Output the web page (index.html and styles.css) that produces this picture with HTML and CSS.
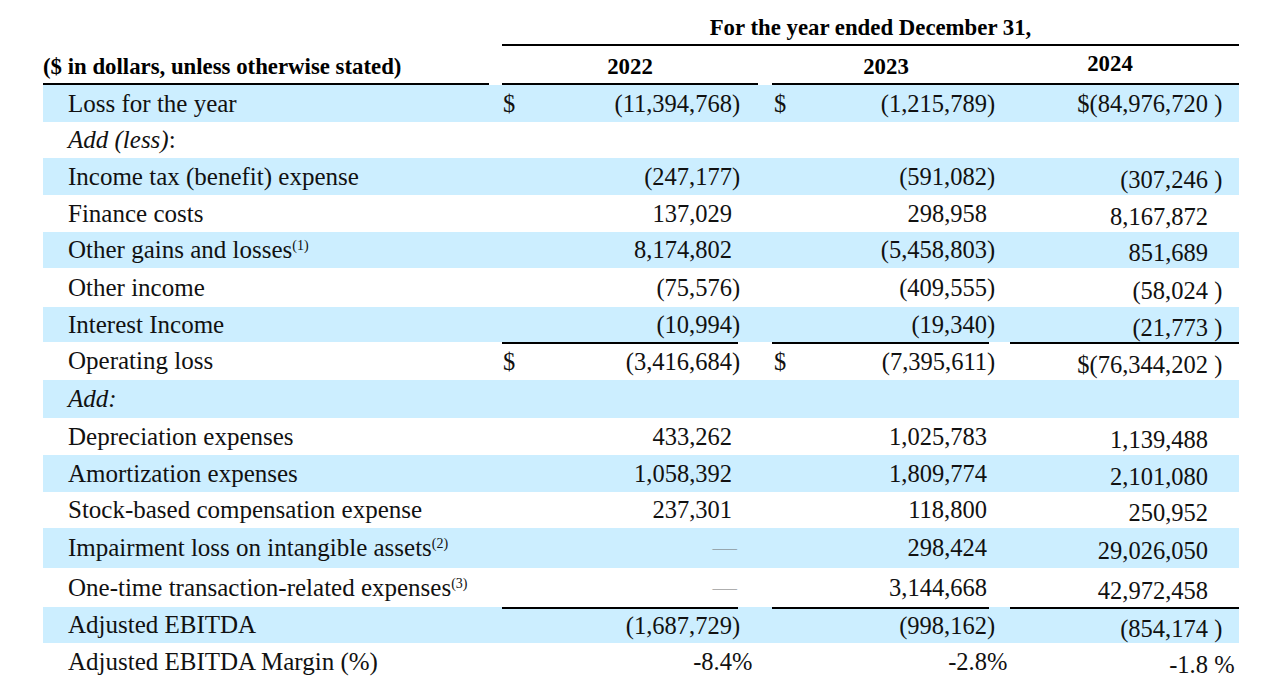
FILE: index.html
```html
<!DOCTYPE html>
<html lang="en">
<head>
<meta charset="utf-8">
<title>Adjusted EBITDA reconciliation</title>
<link rel="stylesheet" href="styles.css">
</head>
<body>
<div class="sheet">
  <div class="h1">For the year ended December 31,</div>
  <div class="h2">
    <div class="h2-label">($ in dollars, unless otherwise stated)</div>
    <div class="h2-gap1"></div>
    <div class="h2-y22">2022</div>
    <div class="h2-gap2"></div>
    <div class="h2-group">
      <div class="h2-y23">2023</div>
      <div class="h2-y24">2024</div>
    </div>
  </div>

  <div class="tbody">
    <div class="row hl">
      <div class="lbl"><span>Loss for the year</span></div>
      <div class="n c22"><span class="cur">$</span><span class="v">(11,394,768<span class="h">)</span></span></div>
      <div></div>
      <div class="n c23"><span class="cur">$</span><span class="v">(1,215,789<span class="h">)</span></span></div>
      <div></div>
      <div class="n c24 flat"><span class="v">$(84,976,720<span class="h">&nbsp;)</span></span></div>
    </div>
    <div class="row">
      <div class="lbl"><span><i>Add (less)</i>:</span></div>
      <div></div><div></div><div></div><div></div><div></div>
    </div>
    <div class="row hl">
      <div class="lbl"><span>Income tax (benefit) expense</span></div>
      <div class="n c22"><span class="v">(247,177<span class="h">)</span></span></div>
      <div></div>
      <div class="n c23"><span class="v">(591,082<span class="h">)</span></span></div>
      <div></div>
      <div class="n c24"><span class="v">(307,246<span class="h">&nbsp;)</span></span></div>
    </div>
    <div class="row">
      <div class="lbl"><span>Finance costs</span></div>
      <div class="n c22"><span class="v">137,029</span></div>
      <div></div>
      <div class="n c23"><span class="v">298,958</span></div>
      <div></div>
      <div class="n c24"><span class="v">8,167,872</span></div>
    </div>
    <div class="row hl">
      <div class="lbl"><span>Other gains and losses<sup>(1)</sup></span></div>
      <div class="n c22"><span class="v">8,174,802</span></div>
      <div></div>
      <div class="n c23"><span class="v">(5,458,803<span class="h">)</span></span></div>
      <div></div>
      <div class="n c24"><span class="v">851,689</span></div>
    </div>
    <div class="row">
      <div class="lbl"><span>Other income</span></div>
      <div class="n c22"><span class="v">(75,576<span class="h">)</span></span></div>
      <div></div>
      <div class="n c23"><span class="v">(409,555<span class="h">)</span></span></div>
      <div></div>
      <div class="n c24"><span class="v">(58,024<span class="h">&nbsp;)</span></span></div>
    </div>
    <div class="row hl">
      <div class="lbl"><span>Interest Income</span></div>
      <div class="n c22"><span class="v">(10,994<span class="h">)</span></span></div>
      <div></div>
      <div class="n c23"><span class="v">(19,340<span class="h">)</span></span></div>
      <div></div>
      <div class="n c24"><span class="v">(21,773<span class="h">&nbsp;)</span></span></div>
    </div>
    <div class="row">
      <div class="lbl"><span>Operating loss</span></div>
      <div class="n c22 rule"><span class="cur">$</span><span class="v">(3,416,684<span class="h">)</span></span></div>
      <div></div>
      <div class="n c23 rule"><span class="cur">$</span><span class="v">(7,395,611<span class="h">)</span></span></div>
      <div></div>
      <div class="n c24 rule"><span class="v">$(76,344,202<span class="h">&nbsp;)</span></span></div>
    </div>
    <div class="row hl">
      <div class="lbl"><span><i>Add:</i></span></div>
      <div></div><div></div><div></div><div></div><div></div>
    </div>
    <div class="row">
      <div class="lbl"><span>Depreciation expenses</span></div>
      <div class="n c22"><span class="v">433,262</span></div>
      <div></div>
      <div class="n c23"><span class="v">1,025,783</span></div>
      <div></div>
      <div class="n c24"><span class="v">1,139,488</span></div>
    </div>
    <div class="row hl">
      <div class="lbl"><span>Amortization expenses</span></div>
      <div class="n c22"><span class="v">1,058,392</span></div>
      <div></div>
      <div class="n c23"><span class="v">1,809,774</span></div>
      <div></div>
      <div class="n c24"><span class="v">2,101,080</span></div>
    </div>
    <div class="row">
      <div class="lbl"><span>Stock-based compensation expense</span></div>
      <div class="n c22"><span class="v">237,301</span></div>
      <div></div>
      <div class="n c23"><span class="v">118,800</span></div>
      <div></div>
      <div class="n c24"><span class="v">250,952</span></div>
    </div>
    <div class="row hl">
      <div class="lbl"><span>Impairment loss on intangible assets<sup>(2)</sup></span></div>
      <div class="n c22"><span class="v"><span class="dash">—</span></span></div>
      <div></div>
      <div class="n c23"><span class="v">298,424</span></div>
      <div></div>
      <div class="n c24"><span class="v">29,026,050</span></div>
    </div>
    <div class="row">
      <div class="lbl"><span>One-time transaction-related expenses<sup>(3)</sup></span></div>
      <div class="n c22"><span class="v"><span class="dash">—</span></span></div>
      <div></div>
      <div class="n c23"><span class="v">3,144,668</span></div>
      <div></div>
      <div class="n c24"><span class="v">42,972,458</span></div>
    </div>
    <div class="row hl">
      <div class="lbl"><span>Adjusted EBITDA</span></div>
      <div class="n c22 rule"><span class="v">(1,687,729<span class="h">)</span></span></div>
      <div></div>
      <div class="n c23 rule"><span class="v">(998,162<span class="h">)</span></span></div>
      <div></div>
      <div class="n c24 rule"><span class="v">(854,174<span class="h">&nbsp;)</span></span></div>
    </div>
    <div class="row">
      <div class="lbl"><span>Adjusted EBITDA Margin (%)</span></div>
      <div class="n c22"><span class="v">-8.4<span class="h">%</span></span></div>
      <div></div>
      <div class="n c23"><span class="v">-2.8<span class="h">%</span></span></div>
      <div></div>
      <div class="n c24"><span class="v">-1.8<span class="h">&nbsp;%</span></span></div>
    </div>
  </div>
</div>
</body>
</html>
```

FILE: styles.css
```css
html, body {
  margin: 0;
  padding: 0;
  background: #ffffff;
}

body {
  font-family: "Liberation Serif", "Times New Roman", serif;
  color: #111111;
}

.sheet {
  width: 1280px;
  height: 697px;
  overflow: hidden;
}

/* ---------- header ---------- */
.h1 {
  margin-left: 502px;
  width: 737px;
  box-sizing: border-box;
  padding-top: 14px;
  padding-bottom: 2px;
  border-bottom: 2px solid #000;
  line-height: 28px;
  font-size: 22.8px;
  font-weight: bold;
  text-align: center;
  color: #000;
}

.h2 {
  display: flex;
  padding-left: 43px;
  font-size: 22.8px;
  font-weight: bold;
  color: #000;
  line-height: 28px;
}

.h2-label,
.h2-y22,
.h2-group {
  padding-top: 7px;
  padding-bottom: 2px;
  border-bottom: 2px solid #000;
}

.h2-label {
  width: 446px;
  white-space: nowrap;
}

.h2-gap1 { width: 13px; }
.h2-gap2 { width: 14px; }

.h2-y22 {
  width: 256px;
  text-align: center;
}

.h2-group {
  width: 467px;
  display: flex;
}

.h2-y23 {
  width: 228px;
  text-align: center;
}

.h2-y24 {
  width: 220px;
  text-align: center;
  margin-top: -3px;
  padding-bottom: 3px;
}

/* ---------- body ---------- */
.tbody {
  display: grid;
  grid-template-rows: 37px 36px 37px 37px 36px 39px 35px 38px 38px 37px 37px 36px 40px 39px 36px 37px;
  margin-left: 43px;
  width: 1196px;
}

.row {
  display: grid;
  grid-template-columns: 459px 236px 34px 217px 21px 229px;
}

.row.hl {
  background: #cceeff;
}

.row > div {
  display: flex;
  align-items: center;
  line-height: 28px;
  box-sizing: border-box;
  white-space: nowrap;
}

.lbl {
  padding-left: 25px;
  font-size: 25px;
}

.lbl sup {
  font-size: 14px;
  line-height: 0;
  vertical-align: 8px;
}

.n {
  font-size: 24.5px;
}

.n .v {
  margin-left: auto;
}

.n .h {
  display: inline-block;
  width: 0;
  white-space: nowrap;
}

.c22 {
  padding-left: 1px;
  padding-right: 6px;
}

.c23 {
  padding-left: 2px;
  padding-right: 2px;
}

.c24 {
  padding-right: 31px;
  padding-top: 6px;
}

.c24.flat {
  padding-top: 0;
}

.rule {
  border-top: 2px solid #000;
}

.dash {
  display: inline-block;
  margin-right: -5px;
  color: #6f6f6f;
  transform: scaleY(0.6);
}
```
